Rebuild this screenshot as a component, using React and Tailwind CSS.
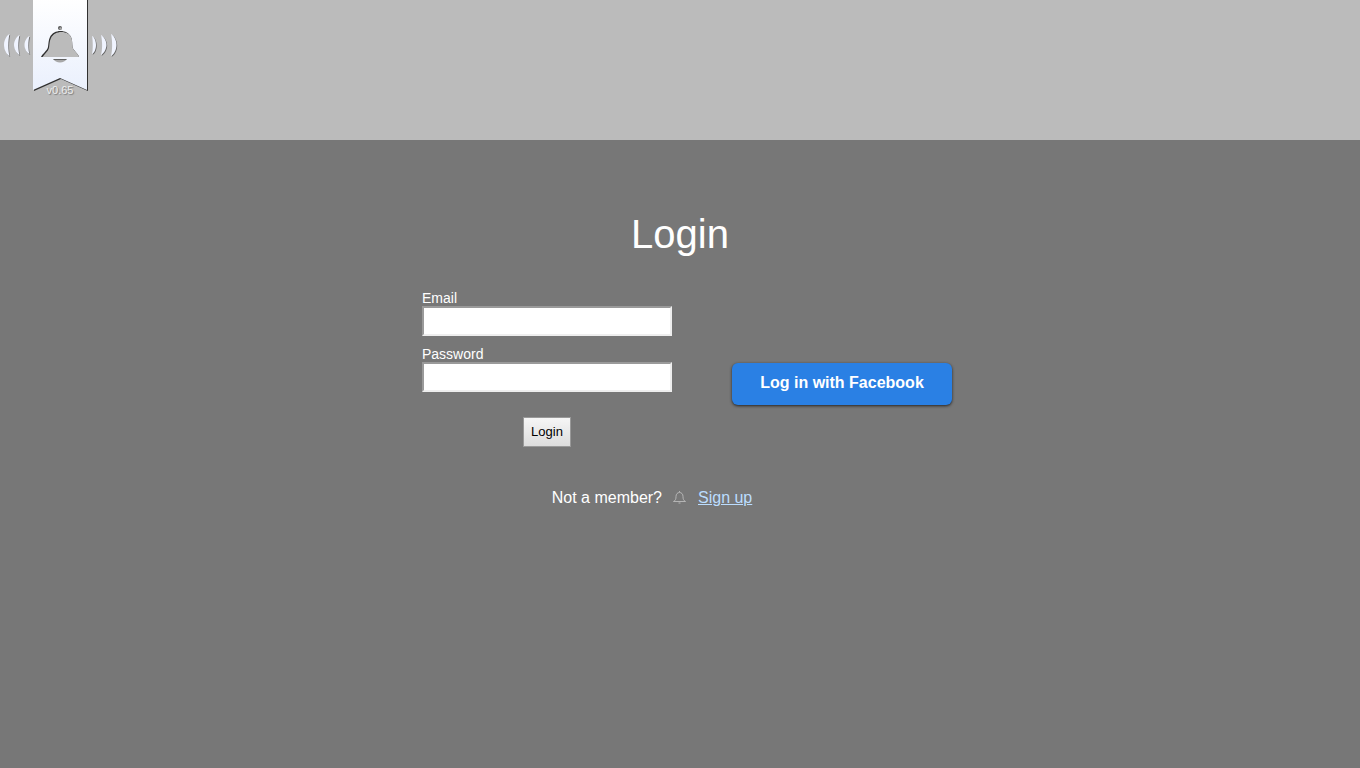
import { useState } from "react";

const RIBBON = "M33 -2H87V90L60 78L33 90Z";
const BELL =
  "M41 57C43 53 47 51 48 47C48.500 43 48.500 40 50 37C52 33 56 31 60.500 31C65 31 69 33 71 37C72.500 40 72 43 72.500 47C73.500 51 78 53 79 57Z";
const WAVES = [
  "M9.500 34C7.500 35 4 39 4 45C4 50 7 55 9.500 56C8 51 8 40 9.500 34Z",
  "M19.500 35C17.500 36 14 40 14 45C14 49 17 54 19.500 55C18 50 18 41 19.500 35Z",
  "M29.500 36C27 37 24.500 41 24.500 45C24.500 49 27 53 29.500 54C28 50 28 41 29.500 36Z",
  "M92 36C94.500 37 96 41 96 45C96 49 94.500 53 92 54C93 50 93 41 92 36Z",
  "M101 35C103 36 106.500 40 106.500 45C106.500 49 103.500 54 101 55C102.500 50 102.500 41 101 35Z",
  "M111 34C113 35 116.500 39 116.500 45C116.500 50 113.500 55 111 56C112.500 51 112.500 40 111 34Z",
];

const Logo = () => (
  <svg
    className="block"
    width="120"
    height="100"
    viewBox="0 0 120 100"
    role="img"
    aria-label="Bell logo"
  >
    <defs>
      <linearGradient id="ribbonFill" x1="0" y1="0" x2="0" y2="1">
        <stop offset="0" stopColor="#ffffff" />
        <stop offset="1" stopColor="#eaf0fd" />
      </linearGradient>
      <clipPath id="bellClip">
        <path d={BELL} />
      </clipPath>
    </defs>

    {/* ribbon, dark edge first */}
    <path d={RIBBON} fill="#303030" transform="translate(1 1)" />
    <path d={RIBBON} fill="url(#ribbonFill)" />

    {/* cut-out bell */}
    <path d={BELL} fill="#303030" />
    <g clipPath="url(#bellClip)">
      <path d={BELL} fill="#bbbbbb" transform="translate(1 1)" />
    </g>
    <circle cx="60" cy="28" r="2" fill="#555555" />
    <circle cx="60.500" cy="28.500" r="1.200" fill="#aaaaaa" />
    <path d="M53.500 59H66.500C65 63.500 55 63.500 53.500 59Z" fill="#a8a8a8" />
    <path d="M53.500 59.500H66.500" stroke="#606060" />

    {/* sound waves */}
    {WAVES.map((d) => (
      <g key={d}>
        <path d={d} fill="#666666" transform="translate(0.700 0.700)" />
        <path d={d} fill="#f0f4ff" />
      </g>
    ))}
  </svg>
);

const SmallBell = () => (
  <svg
    width="14"
    height="14"
    viewBox="0 0 14 14"
    fill="none"
    stroke="#bbbbbb"
    strokeWidth="0.900"
    aria-hidden="true"
  >
    <path d="M0.500 10.500C2.500 9.500 3 8 3 5.500C3 3 4.500 1.500 6.500 1.500C8.500 1.500 10 3 10 5.500C10 8 10.500 9.500 12.500 10.500Z" />
    <path d="M6.500 0V1M5.500 12H7.500" />
  </svg>
);

const Field = ({ id, label, type, value, onChange }) => (
  <div className="flex flex-col">
    <label htmlFor={id} className="text-sm leading-4">
      {label}
    </label>
    <input
      id={id}
      type={type}
      value={value}
      onChange={(e) => onChange(e.target.value)}
      className="h-[30px] w-full border-2 border-t-[#9a9a9a] border-l-[#9a9a9a] border-r-[#eeeeee] border-b-[#eeeeee] bg-white px-1 text-sm text-black outline-none"
    />
  </div>
);

const App = () => {
  const [email, setEmail] = useState("");
  const [password, setPassword] = useState("");

  const handleSubmit = (event) => {
    event.preventDefault();
  };

  return (
    <div className="flex min-h-screen flex-col bg-[#777777] font-['Liberation_Sans',Arial,sans-serif] text-white">
      <header className="h-[140px] bg-[#bbbbbb]">
        <div className="relative w-[120px]">
          <Logo />
          <span className="absolute inset-x-0 bottom-1 text-center text-[11px] leading-3 text-[#eeeeee] [text-shadow:1px_1px_1px_#777777]">
            v0.65
          </span>
        </div>
      </header>

      <main className="flex flex-col items-center pt-[70px]">
        <h1 className="text-[40px] leading-[48px]">Login</h1>

        <div className="mt-8 flex items-center gap-[60px] pl-3.5">
          <form onSubmit={handleSubmit} className="flex w-[250px] flex-col gap-2.5">
            <Field
              id="email"
              label="Email"
              type="email"
              value={email}
              onChange={setEmail}
            />
            <Field
              id="password"
              label="Password"
              type="password"
              value={password}
              onChange={setPassword}
            />
            <button
              type="submit"
              className="mt-[15px] h-[30px] self-center border border-[#999999] bg-linear-to-b from-[#f6f6f6] to-[#dddddd] px-[7px] text-[13px] text-black"
            >
              Login
            </button>
          </form>

          <button
            type="button"
            className="mt-[30px] h-[42px] w-[220px] rounded-md bg-[#2a80e4] pb-0.5 text-base font-bold shadow-[0_1px_3px_#222222]"
          >
            Log in with Facebook
          </button>
        </div>

        <div className="mt-[39px] grid w-full grid-cols-[1fr_auto_1fr] items-center gap-x-[11px] text-base">
          <span className="text-right">Not a member?</span>
          <SmallBell />
          <a href="#signup" className="justify-self-start text-[#bbddff] underline">
            Sign up
          </a>
        </div>
      </main>
    </div>
  );
};

export default App;
